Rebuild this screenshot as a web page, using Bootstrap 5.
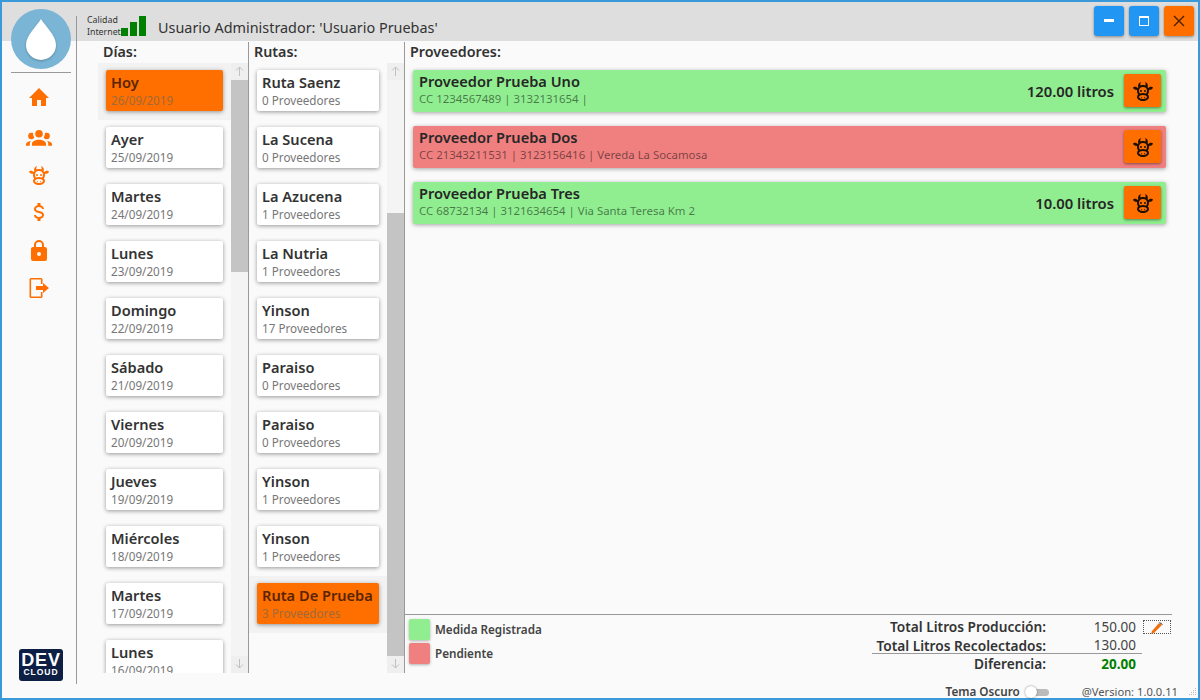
<!DOCTYPE html>
<html lang="es"><head><meta charset="utf-8"><title>Usuario</title>
<link href="https://cdn.jsdelivr.net/npm/bootstrap@5.3.0/dist/css/bootstrap.min.css" rel="stylesheet">
<style>
html,body{height:700px;overflow:hidden}
body{background:#fafafa;font-family:"Noto Sans",sans-serif;color:#333}
.win{width:1200px;height:700px;border:2px solid #3a9ad9;background:#fafafa}
.tbar{height:39px;background:#dedede;padding-left:85px}
.q-txt{font-size:8.8px;line-height:12px;color:#333;margin-top:12px;width:34px}
.bars{gap:2px;height:20px;margin-top:14px;margin-left:0}
.bars i{display:block;width:7px;background:#008000}
.ttl{font-size:14.4px;color:#333;margin-left:12px;margin-top:15px;line-height:22px}
.wbtn{width:30px;height:30px;border-radius:3px;border:0;padding:0;box-shadow:0 1px 3px rgba(0,0,0,.4)}
.wb-blue{background:#2196f3}.wb-or{background:#ff6f00}
.wbtns{gap:5px;margin:4px 4px 0 auto}
.wmain{height:657px;min-height:0}
.side{width:75px;margin-top:-25px;margin-bottom:14px;border-right:1px solid #999;position:relative;z-index:2;flex:none}
.logo{width:60px;height:60px;border-radius:50%;background:#7ab5d6;margin-left:9px;margin-top:-7px}
.logo svg{filter:drop-shadow(0 1px 1px rgba(0,0,0,.25))}
.side-hr{width:60px;height:1px;background:#999;margin:3px 0 0 9px}
.s-ico{gap:13px;margin-top:13px}
.s-ico svg{display:block;fill:#ff6f00}
.s-ico svg:nth-child(2){margin-top:1px}
.s-ico svg:nth-child(5){margin-top:2px}
.dev{width:44px;height:32px;background:#0d1f45;border-radius:3px;color:#fff;margin:auto 0 3px 17px;line-height:1;font-family:"Liberation Sans",sans-serif;font-weight:700}
.dev b{font-size:18px;letter-spacing:.8px;line-height:15px}
.dev span{font-size:8.5px;letter-spacing:1px;line-height:9px;font-weight:700}
.rcol{min-width:0;height:657px}
.cols{height:632px}
.c-dias{width:172px;border-right:1px solid #999;flex:none;margin-top:1px}
.c-rut{width:156px;border-right:1px solid #999;flex:none;margin-top:1px}
.c-main{min-width:0}
.hd{font-size:14.3px;font-weight:600;line-height:20px;height:21px;color:#333}
.c-dias .hd{padding-left:26px}.c-rut .hd{padding-left:5px}
.scrl{height:610px;overflow:hidden}
.lst{min-width:0}
.c-dias .lst{padding-left:21px}
.it{height:57px;padding:7px 8px;flex:none}
.it.on{background:#f2f2f2}
.tcard{height:41px;background:#fff;border-radius:2px;box-shadow:0 1px 4px rgba(0,0,0,.4);padding:2px 5px}
.nm{font-size:14.6px;font-weight:600;line-height:20px;height:21px;color:#333}
.sb{font-size:11.7px;line-height:14px;color:#777}
.on .tcard{background:#ff6f00}.on .nm{color:#5a2400}.on .sb{color:#a06a3a}
.vbar{width:17px;flex:none;background:#f4f4f4}
.vb-b{height:17px;flex:none;background:#efefef}
.vb-b svg{display:block;margin:3px auto 0;stroke:#c0c0c0;fill:none}
.th{background:#c4c4c4}
.hd-m{padding-left:5px;margin-top:1px}
.plist{padding:7px 32px 0 8px;gap:14px}
.pv{height:42px;border-radius:2px;box-shadow:0 1px 4px rgba(0,0,0,.35);padding:1px 5px 0 6px}
.pv-g{background:#90ee90}.pv-r{background:#f08080}
.pv .nm{color:#262626}
.pv .sb{color:rgba(0,0,0,.5);font-size:11.4px}
.lit{font-size:14.8px;font-weight:600;color:#262626;margin-right:10px}
.cow{width:37px;height:33px;background:#ff6f00;border-radius:2px;box-shadow:0 1px 3px rgba(0,0,0,.45);margin-top:3px}
.cow svg{fill:#1e1000}
.bott{border-top:1px solid #999;margin:0 26px 0 0;height:59px;flex:none}
.leg{padding:4px 0 0 4px;gap:3px}
.sq{width:21px;height:21px;border-radius:2px;box-shadow:0 1px 3px rgba(0,0,0,.3)}
.lg-t{font-size:11.7px;font-weight:600;margin-left:5px;color:#444}
.tot{font-size:13.7px;line-height:18px;padding:3px 1px 0 0;width:300px}
.tr-l{width:174px;text-align:right;font-weight:600;color:#333;white-space:nowrap}
.tr-v{width:90px;text-align:right;color:#444;font-size:13.5px}
.tr-line{border-bottom:1px solid #999;width:270px;height:18px;line-height:19px}
.tr-dif{line-height:20px}
.green-v{color:#008000;font-weight:700}
.edit{width:28px;height:14px;border:1px dotted #555;margin-left:7px}
.foot{height:25px;flex:none;padding-right:1px;padding-top:13px}
.tema{font-weight:600;font-size:11.7px;color:#444}
.sw{width:24px;height:14px;margin:0 33px 0 5px;position:relative}
.sw::before{content:"";position:absolute;left:6px;right:0;top:4px;height:7px;background:#bbb;border-radius:4px}
.sw::after{content:"";position:absolute;left:0;top:1px;width:12px;height:12px;border-radius:50%;background:#fff;box-shadow:0 0 2px rgba(0,0,0,.5)}
.ver{color:#555;font-size:11.2px;margin-right:7px}
.grip{fill:#bbb}
</style></head>
<body>
<div class="win d-flex flex-column">
 <div class="tbar d-flex flex-none">
  <div class="q-txt">Calidad<br>Internet</div>
  <div class="bars d-flex align-items-end"><i style="height:8px"></i><i style="height:14px"></i><i style="height:20px"></i></div>
  <div class="ttl">Usuario Administrador: 'Usuario Pruebas'</div>
  <div class="wbtns d-flex">
   <button class="wbtn wb-blue d-flex align-items-center justify-content-center" aria-label="min"><svg width="12" height="4"><rect width="10" height="3" x="1" fill="#fff"/></svg></button>
   <button class="wbtn wb-blue d-flex align-items-center justify-content-center" aria-label="max"><svg width="12" height="12"><rect x="1.500" y="1.500" width="9" height="9" fill="none" stroke="#fff"/><rect width="10" height="2" x="1" y="1" fill="#fff"/></svg></button>
   <button class="wbtn wb-or d-flex align-items-center justify-content-center" aria-label="cerrar"><svg width="12" height="12"><path d="M1 1L11 11M11 1L1 11" stroke="#4a2000" stroke-width="1.4"/></svg></button>
  </div>
 </div>
 <div class="wmain d-flex">
  <div class="side d-flex flex-column">
   <div class="logo d-flex align-items-center justify-content-center"><svg width="34" height="44" viewBox="0 0 34 44"><path d="M17 2C13 9 2 18 2 28a15 15 0 0 0 30 0C32 18 21 9 17 2Z" fill="#fff"/></svg></div>
   <div class="side-hr"></div>
   <div class="s-ico d-flex flex-column align-items-center">
    <svg width="24" height="24" viewBox="0 0 24 24"><path d="M10,20V14H14V20H19V12H22L12,2L2,12H5V20H10Z"/></svg>
    <svg width="26" height="26" viewBox="0 0 24 24"><path d="M12,5.5A3.5,3.5 0 0,1 15.5,9A3.5,3.5 0 0,1 12,12.5A3.5,3.5 0 0,1 8.5,9A3.5,3.5 0 0,1 12,5.5M5,8C5.56,8 6.08,8.15 6.53,8.42C6.38,9.85 6.8,11.27 7.66,12.38C7.16,13.34 6.16,14 5,14A3,3 0 0,1 2,11A3,3 0 0,1 5,8M19,8A3,3 0 0,1 22,11A3,3 0 0,1 19,14C17.84,14 16.84,13.34 16.34,12.38C17.2,11.27 17.62,9.85 17.47,8.42C17.92,8.15 18.44,8 19,8M5.5,18.25C5.5,16.18 8.41,14.5 12,14.5C15.59,14.5 18.5,16.18 18.5,18.25V20H5.5V18.25M0,20V18.5C0,17.11 1.89,15.94 4.45,15.6C3.86,16.28 3.5,17.22 3.5,18.25V20H0M24,20H20.5V18.25C20.5,17.22 20.14,16.28 19.55,15.6C22.11,15.94 24,17.11 24,18.5V20Z"/></svg>
    <svg width="24" height="24" viewBox="0 0 24 24"><use href="#cowp"/></svg>
    <svg width="24" height="24" viewBox="0 0 24 24"><path d="M7,15H9C9,16.08 10.37,17 12,17C13.63,17 15,16.08 15,15C15,13.9 13.96,13.5 11.76,12.97C9.64,12.44 7,11.78 7,9C7,7.21 8.47,5.69 10.5,5.18V3H13.5V5.18C15.53,5.69 17,7.21 17,9H15C15,7.92 13.63,7 12,7C10.37,7 9,7.92 9,9C9,10.1 10.04,10.5 12.24,11.03C14.36,11.56 17,12.22 17,15C17,16.79 15.53,18.31 13.5,18.82V21H10.5V18.82C8.47,18.31 7,16.79 7,15Z"/></svg>
    <svg width="24" height="24" viewBox="0 0 24 24"><path d="M12,17A2,2 0 0,0 14,15C14,13.89 13.1,13 12,13A2,2 0 0,0 10,15A2,2 0 0,0 12,17M18,8A2,2 0 0,1 20,10V20A2,2 0 0,1 18,22H6A2,2 0 0,1 4,20V10C4,8.89 4.9,8 6,8H7V6A5,5 0 0,1 12,1A5,5 0 0,1 17,6V8H18M12,3A3,3 0 0,0 9,6V8H15V6A3,3 0 0,0 12,3Z"/></svg>
    <svg width="24" height="24" viewBox="0 0 24 24"><path d="M4 2h10a1.500 1.500 0 0 1 1.500 1.500V8h-1.600V3.600H4.100v16.800h9.800V16h1.600v4.500A1.500 1.500 0 0 1 14 22H4a1.500 1.500 0 0 1-1.500-1.500v-17A1.500 1.500 0 0 1 4 2ZM9 10h7V7l6 5-6 5v-3H9Z"/></svg>
   </div>
   <div class="dev d-flex flex-column align-items-center justify-content-center"><b>DEV</b><span>CLOUD</span></div>
  </div>
  <div class="rcol flex-grow-1 d-flex flex-column">
   <div class="cols d-flex">
    <div class="c-dias">
     <div class="hd">Días:</div>
     <div class="scrl d-flex">
      <div class="lst flex-grow-1">
       <div class="it on"><div class="tcard"><div class="nm">Hoy</div><div class="sb">26/09/2019</div></div></div>
       <div class="it"><div class="tcard"><div class="nm">Ayer</div><div class="sb">25/09/2019</div></div></div>
       <div class="it"><div class="tcard"><div class="nm">Martes</div><div class="sb">24/09/2019</div></div></div>
       <div class="it"><div class="tcard"><div class="nm">Lunes</div><div class="sb">23/09/2019</div></div></div>
       <div class="it"><div class="tcard"><div class="nm">Domingo</div><div class="sb">22/09/2019</div></div></div>
       <div class="it"><div class="tcard"><div class="nm">Sábado</div><div class="sb">21/09/2019</div></div></div>
       <div class="it"><div class="tcard"><div class="nm">Viernes</div><div class="sb">20/09/2019</div></div></div>
       <div class="it"><div class="tcard"><div class="nm">Jueves</div><div class="sb">19/09/2019</div></div></div>
       <div class="it"><div class="tcard"><div class="nm">Miércoles</div><div class="sb">18/09/2019</div></div></div>
       <div class="it"><div class="tcard"><div class="nm">Martes</div><div class="sb">17/09/2019</div></div></div>
       <div class="it"><div class="tcard"><div class="nm">Lunes</div><div class="sb">16/09/2019</div></div></div>
      </div>
      <div class="vbar d-flex flex-column">
       <div class="vb-b"><svg width="9" height="10"><path d="M4.500 10V1M1 4.500L4.500 1L8 4.500"/></svg></div>
       <div class="th" style="height:192px"></div>
       <div class="flex-grow-1"></div>
       <div class="vb-b"><svg width="9" height="10"><path d="M4.500 0V9M1 5.500L4.500 9L8 5.500"/></svg></div>
      </div>
     </div>
    </div>
    <div class="c-rut">
     <div class="hd">Rutas:</div>
     <div class="scrl d-flex">
      <div class="lst flex-grow-1">
       <div class="it"><div class="tcard"><div class="nm">Ruta Saenz</div><div class="sb">0 Proveedores</div></div></div>
       <div class="it"><div class="tcard"><div class="nm">La Sucena</div><div class="sb">0 Proveedores</div></div></div>
       <div class="it"><div class="tcard"><div class="nm">La Azucena</div><div class="sb">1 Proveedores</div></div></div>
       <div class="it"><div class="tcard"><div class="nm">La Nutria</div><div class="sb">1 Proveedores</div></div></div>
       <div class="it"><div class="tcard"><div class="nm">Yinson</div><div class="sb">17 Proveedores</div></div></div>
       <div class="it"><div class="tcard"><div class="nm">Paraiso</div><div class="sb">0 Proveedores</div></div></div>
       <div class="it"><div class="tcard"><div class="nm">Paraiso</div><div class="sb">0 Proveedores</div></div></div>
       <div class="it"><div class="tcard"><div class="nm">Yinson</div><div class="sb">1 Proveedores</div></div></div>
       <div class="it"><div class="tcard"><div class="nm">Yinson</div><div class="sb">1 Proveedores</div></div></div>
       <div class="it on"><div class="tcard"><div class="nm">Ruta De Prueba</div><div class="sb">3 Proveedores</div></div></div>
      </div>
      <div class="vbar d-flex flex-column">
       <div class="vb-b"><svg width="9" height="10"><path d="M4.500 10V1M1 4.500L4.500 1L8 4.500"/></svg></div>
       <div style="height:133px"></div>
       <div class="th flex-grow-1"></div>
       <div class="vb-b"><svg width="9" height="10"><path d="M4.500 0V9M1 5.500L4.500 9L8 5.500"/></svg></div>
      </div>
     </div>
    </div>
    <div class="c-main flex-grow-1 d-flex flex-column">
     <div class="hd hd-m">Proveedores:</div>
     <div class="plist d-flex flex-column flex-grow-1">
      <div class="pv pv-g d-flex"><div class="flex-grow-1"><div class="nm">Proveedor Prueba Uno</div><div class="sb">CC 1234567489 | 3132131654 |</div></div><div class="lit align-self-center">120.00 litros</div><div class="cow d-flex align-items-center justify-content-center"><svg width="24" height="24" viewBox="0 0 24 24"><use href="#cowp"/></svg></div></div>
      <div class="pv pv-r d-flex"><div class="flex-grow-1"><div class="nm">Proveedor Prueba Dos</div><div class="sb">CC 21343211531 | 3123156416 | Vereda La Socamosa</div></div><div class="cow d-flex align-items-center justify-content-center"><svg width="24" height="24" viewBox="0 0 24 24"><use href="#cowp"/></svg></div></div>
      <div class="pv pv-g d-flex"><div class="flex-grow-1"><div class="nm">Proveedor Prueba Tres</div><div class="sb">CC 68732134 | 3121634654 | Via Santa Teresa Km 2</div></div><div class="lit align-self-center">10.00 litros</div><div class="cow d-flex align-items-center justify-content-center"><svg width="24" height="24" viewBox="0 0 24 24"><use href="#cowp"/></svg></div></div>
     </div>
     <div class="bott d-flex justify-content-between">
      <div class="leg d-flex flex-column">
       <div class="d-flex align-items-center"><div class="sq pv-g"></div><div class="lg-t">Medida Registrada</div></div>
       <div class="d-flex align-items-center"><div class="sq pv-r"></div><div class="lg-t">Pendiente</div></div>
      </div>
      <div class="tot">
       <div class="d-flex align-items-center"><div class="tr-l">Total Litros Producción:</div><div class="tr-v">150.00</div><div class="edit d-flex justify-content-center"><svg width="16" height="14" viewBox="0 0 16 14"><path d="M2 13l1-3 7-8 3 2-8 8Z" fill="#f07010"/><path d="M10.500 1.500l3 2" stroke="#333"/></svg></div></div>
       <div class="tr-line d-flex"><div class="tr-l">Total Litros Recolectados:</div><div class="tr-v">130.00</div></div>
       <div class="tr-dif d-flex"><div class="tr-l">Diferencia:</div><div class="tr-v green-v">20.00</div></div>
      </div>
     </div>
    </div>
   </div>
   <div class="foot d-flex justify-content-end align-items-center"><span class="tema">Tema Oscuro</span><span class="sw"></span><span class="ver">@Version: 1.0.0.11</span><svg class="grip" width="12" height="12"><rect x="10" y="2" width="1" height="1"/><rect x="8" y="4" width="1" height="1"/><rect x="10" y="4" width="1" height="1"/><rect x="6" y="6" width="1" height="1"/><rect x="8" y="6" width="1" height="1"/><rect x="10" y="6" width="1" height="1"/><rect x="4" y="8" width="1" height="1"/><rect x="6" y="8" width="1" height="1"/><rect x="8" y="8" width="1" height="1"/><rect x="10" y="8" width="1" height="1"/></svg></div>
  </div>
 </div>
</div>
<svg width="0" height="0" class="d-block"><defs><path id="cowp" d="M10.5,18A0.5,0.5 0 0,1 11,18.5A0.5,0.5 0 0,1 10.5,19A0.5,0.5 0 0,1 10,18.5A0.5,0.5 0 0,1 10.5,18M13.5,18A0.5,0.5 0 0,1 14,18.5A0.5,0.5 0 0,1 13.5,19A0.5,0.5 0 0,1 13,18.5A0.5,0.5 0 0,1 13.5,18M10,11A1,1 0 0,1 11,12A1,1 0 0,1 10,13A1,1 0 0,1 9,12A1,1 0 0,1 10,11M14,11A1,1 0 0,1 15,12A1,1 0 0,1 14,13A1,1 0 0,1 13,12A1,1 0 0,1 14,11M18,18C18,20.21 15.31,22 12,22C8.69,22 6,20.21 6,18C6,17.1 6.45,16.27 7.2,15.6C6.45,14.6 6,13.35 6,12L6.12,10.78C5.58,10.93 4.93,10.93 4.4,10.78C3.38,10.5 1.84,9.35 2.07,8.55C2.3,7.75 4.21,7.6 5.23,7.9C5.82,8.07 6.45,8.5 6.82,8.96L7.39,8.15C6.79,7.05 7,4 10,3L9.91,3.14V3.14C9.63,3.58 8.91,4.97 9.67,6.47C10.39,6.17 11.17,6 12,6C12.83,6 13.61,6.17 14.33,6.47C15.09,4.97 14.37,3.58 14.09,3.14L14,3C17,4 17.21,7.05 16.61,8.15L17.18,8.96C17.55,8.5 18.18,8.07 18.77,7.9C19.79,7.6 21.7,7.75 21.93,8.55C22.16,9.35 20.62,10.5 19.6,10.78C19.07,10.93 18.42,10.93 17.88,10.78L18,12C18,13.35 17.55,14.6 16.8,15.6C17.55,16.27 18,17.1 18,18M12,16C9.79,16 8,16.9 8,18C8,19.1 9.79,20 12,20C14.21,20 16,19.1 16,18C16,16.9 14.21,16 12,16M12,14C13.12,14 14.17,14.21 15.07,14.56C15.65,13.87 16,13 16,12A4,4 0 0,0 12,8A4,4 0 0,0 8,12C8,13 8.35,13.87 8.93,14.56C9.83,14.21 10.88,14 12,14Z"/></defs></svg>
<script src="https://cdn.jsdelivr.net/npm/bootstrap@5.3.0/dist/js/bootstrap.bundle.min.js"></script>
</body></html>
